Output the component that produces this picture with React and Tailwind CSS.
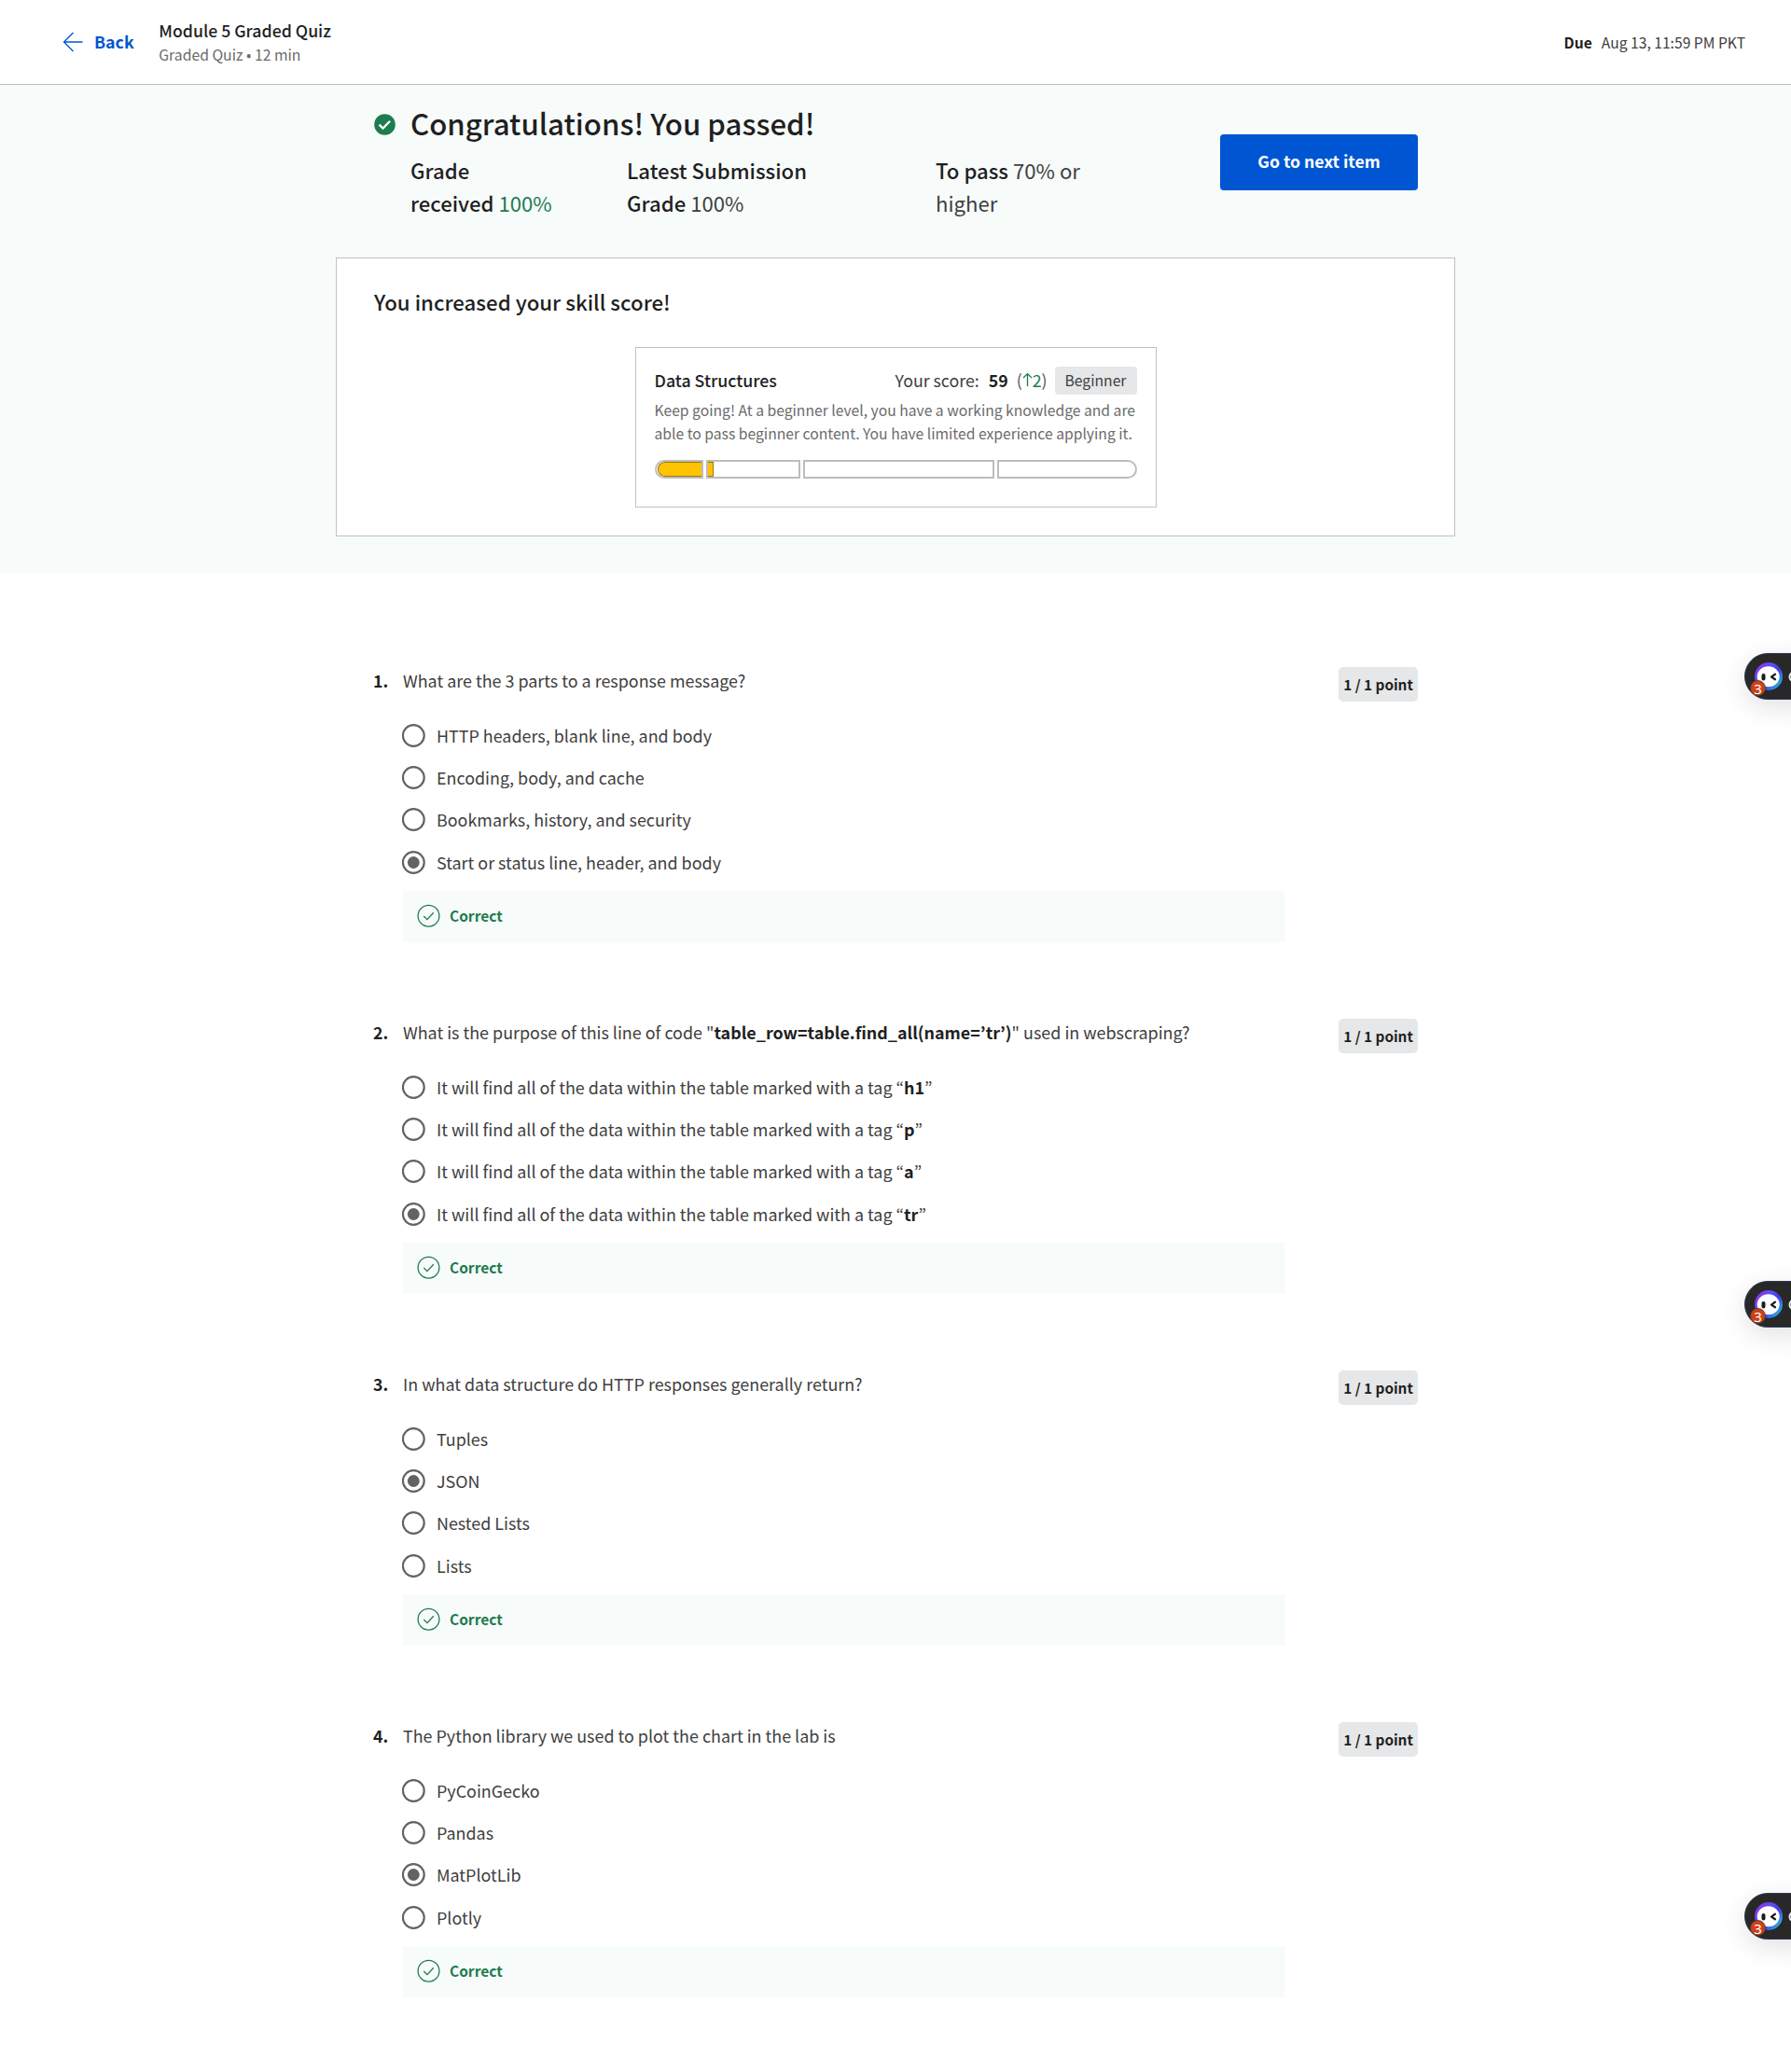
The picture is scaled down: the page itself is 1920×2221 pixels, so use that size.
import React from "react";

const tag = (name) => (
  <>
    It will find all of the data within the table marked with a tag “<b className="font-bold text-[#1f1f1f]">{name}</b>”
  </>
);

const QUESTIONS = [
  {
    text: "What are the 3 parts to a response message?",
    options: ["HTTP headers, blank line, and body", "Encoding, body, and cache", "Bookmarks, history, and security", "Start or status line, header, and body"],
    selected: 3,
  },
  {
    text: (
      <>
        What is the purpose of this line of code "
        <b className="font-bold text-[#1f1f1f]">table_row=table.find_all(name=’tr’)</b>" used in webscraping?
      </>
    ),
    options: [tag("h1"), tag("p"), tag("a"), tag("tr")],
    selected: 3,
  },
  {
    text: "In what data structure do HTTP responses generally return?",
    options: ["Tuples", "JSON", "Nested Lists", "Lists"],
    selected: 1,
  },
  {
    text: "The Python library we used to plot the chart in the lab is",
    options: ["PyCoinGecko", "Pandas", "MatPlotLib", "Plotly"],
    selected: 2,
  },
];

function Radio({ checked }) {
  return (
    <svg className="-ml-[1.2px] shrink-0" width="25" height="26" viewBox="0 0 25 26">
      <circle cx="12.3" cy="13.5" r="11.4" fill="#fff" stroke="#636363" strokeWidth="2.2" />
      {checked && <circle cx="12.3" cy="13.5" r="6.4" fill="#636363" />}
    </svg>
  );
}

function Question({ number, text, options, selected }) {
  return (
    <section className="flex h-[377px] items-start">
      <div className="w-8 shrink-0 text-[17.8px] leading-[30px] font-bold">{number}.</div>
      <div className="w-[945px]">
        <p className="h-[30px] text-[17.92px] leading-[30px] whitespace-nowrap text-[#404040]">{text}</p>
        <div className="mt-[29px] flex flex-col gap-[15px]">
          {options.map((o, i) => (
            <label key={i} className="flex h-[30px] items-center gap-[12.2px] last:mt-px">
              <Radio checked={i === selected} />
              <span className="text-[17.92px] leading-[30px] whitespace-nowrap text-[#404040]">{o}</span>
            </label>
          ))}
        </div>
        <div className="mt-4 flex h-[55px] items-center gap-[10px] bg-[#f7fbfa] pb-[2px] pl-[15px] text-[#1d7c50]">
          <svg width="25" height="25" viewBox="0 0 25 25" fill="none" stroke="currentColor" strokeWidth="1.3">
            <circle cx="12.5" cy="12.7" r="11.4" />
            <path d="M7.3 13l3.6 3.6 6.9-7.4" />
          </svg>
          <span className="mb-[2px] text-[15.5px] leading-6 font-bold">Correct</span>
        </div>
      </div>
      <div className="mt-px ml-[58px] flex h-[37px] w-[85px] items-center justify-center rounded-[5px] bg-[#e5e7e8] text-[15.3px] font-bold whitespace-nowrap">
        1 / 1 point
      </div>
    </section>
  );
}

function AssistantPill({ className }) {
  return (
    <div className={"absolute left-[1870px] h-[50px] w-[90px] rounded-[25px] border border-[#2c3a55] bg-[#272827] shadow-[0_8px_28px_rgba(0,0,0,0.12)] " + className}>
      <svg className="absolute -top-px -left-px" width="50" height="50" viewBox="0 0 50 50">
        <defs>
          <linearGradient id="ring" x1="0.1" y1="0.2" x2="0.9" y2="0.85">
            <stop offset="0" stopColor="#8a35e8" />
            <stop offset="0.3" stopColor="#5a50f0" />
            <stop offset="0.6" stopColor="#4a35f0" />
            <stop offset="1" stopColor="#22b5dc" />
          </linearGradient>
        </defs>
        <circle cx="26" cy="25" r="15" fill="url(#ring)" />
        <ellipse cx="25.7" cy="25.3" rx="12" ry="11" fill="#fff" />
        <rect x="18.5" y="22" width="4" height="7.4" rx="2" fill="#1b1b1b" />
        <path d="M33 22.6l-4 3 4 2.6" fill="none" stroke="#1b1b1b" strokeWidth="2.3" strokeLinecap="round" strokeLinejoin="round" />
        <circle cx="14.5" cy="37.5" r="8" fill="#cf4016" stroke="#3c3c3c" strokeWidth="0.8" />
        <circle cx="53.5" cy="25.5" r="5" fill="none" stroke="#eee" strokeWidth="2" />
      </svg>
      <span className="absolute top-[29px] left-[5.5px] w-4 text-center font-['Noto_Sans'] text-[15px] leading-4 text-white">3</span>
    </div>
  );
}

export default function App() {
  return (
    <div className="relative h-[2221px] w-[1920px] overflow-hidden bg-white font-['Noto_Sans_CJK_KR',sans-serif] text-[#1f1f1f]">
      <header className="flex h-[91px] items-center border-b border-[#bdbdbd] pr-[49px] pl-[67px]">
        <svg width="23" height="22" viewBox="0 0 23 22" fill="none" stroke="#0056d2" strokeWidth="1.3">
          <path d="M11.5 1L1.5 11l10 10M1.5 11H21.5" />
        </svg>
        <span className="mb-[2px] ml-[11px] text-[17.8px] leading-[30px] font-bold text-[#0056d2]">Back</span>
        <div className="mt-px ml-[26.5px]">
          <div className="text-[17.7px] leading-[26px] font-medium">Module 5 Graded Quiz</div>
          <div className="text-[15.75px] leading-[28px] text-[#6b6b6b]">Graded Quiz • 12 min</div>
        </div>
        <div className="mt-px ml-auto flex gap-[10px] text-[15.65px] leading-6">
          <span className="font-bold">Due</span>
          <span className="text-[#404040]">Aug 13, 11:59 PM PKT</span>
        </div>
      </header>

      <div className="h-[524px] bg-[#f7fbfa] px-[360px] pt-5">
        <div className="flex h-[165px] pl-[41px]">
          <svg className="mt-[11px] shrink-0" width="23" height="23" viewBox="0 0 23 23">
            <circle cx="11.5" cy="11.5" r="11.3" fill="#1d7c50" />
            <path d="M5.6 11.6l3.9 4 7.6-7.8" fill="none" stroke="#fff" strokeWidth="2.3" />
          </svg>
          <div className="mt-px ml-4">
            <h1 className="text-[31.2px] leading-[40px] font-medium">Congratulations! You passed!</h1>
            <div className="mt-[13px] flex text-[22.15px] leading-[35px] whitespace-nowrap">
              <div className="w-[232px]">
                <div className="font-medium">Grade</div>
                <div className="text-[#1d7c50]"><span className="font-medium text-[#1f1f1f]">received</span> 100%</div>
              </div>
              <div className="w-[331px]">
                <div className="font-medium">Latest Submission</div>
                <div className="text-[#404040]"><span className="font-medium text-[#1f1f1f]">Grade</span> 100%</div>
              </div>
              <div className="text-[#404040]">
                <div><span className="font-medium text-[#1f1f1f]">To pass</span> 70% or</div>
                <div>higher</div>
              </div>
            </div>
          </div>
          <button className="mt-[33px] mr-10 ml-auto h-[60px] w-[212px] rounded-[4px] bg-[#0056d2] pb-px text-[17.6px] font-bold text-white">Go to next item</button>
        </div>

        <div className="h-[299px] border border-[#c1c1c1] bg-white pt-[31px]">
          <h2 className="ml-10 text-[22.25px] leading-[30px] font-medium">You increased your skill score!</h2>
          <div className="mx-auto mt-[34px] h-[172px] w-[559px] border border-[#c1c1c1] px-5 pt-5">
            <div className="flex h-[30px] items-center text-[17.75px] leading-[28px] whitespace-nowrap">
              <span className="mb-[2px] font-medium">Data Structures</span>
              <span className="mb-[2px] ml-auto text-[#404040]">Your score:</span>
              <span className="mb-[2px] ml-[10px] font-bold">59</span>
              <span className="mb-[2px] ml-[9px] flex items-center text-[#555]">
                (
                <svg width="11" height="16" viewBox="0 0 11 16" fill="none" stroke="#1d7c50" strokeWidth="1.3">
                  <path d="M5.5 15V1.8M1 6l4.5-4.4L10 6" />
                </svg>
                <span className="text-[#1d7c50]">2</span>)
              </span>
              <span className="ml-2 flex h-[30px] w-[88px] items-center justify-center rounded-[4px] bg-[#e5e7e8] pb-px text-[15.7px] text-[#404040]">Beginner</span>
            </div>
            <p className="mt-1 text-[15.68px] leading-[25px] whitespace-nowrap text-[#6b6b6b]">
              Keep going! At a beginner level, you have a working knowledge and are<br />
              able to pass beginner content. You have limited experience applying it.
            </p>
            <div className="mt-4 flex h-5 gap-[2.5px]">
              <div className="w-[52.5px] overflow-hidden rounded-l-full border-2 border-[#bdbdbd]">
                <div className="ml-px h-4 rounded-l-full border-y-[1.5px] border-l-[1.5px] border-[#997a12] bg-[#ffc300]" />
              </div>
              <div className="w-[101.5px] border-2 border-[#bdbdbd]">
                <div className="h-4 w-[6px] border-y-[1.5px] border-r-[1.5px] border-[#997a12] bg-[#ffc300]" />
              </div>
              <div className="w-[205.5px] border-2 border-[#bdbdbd]" />
              <div className="flex-1 rounded-r-full border-2 border-[#bdbdbd]" />
            </div>
          </div>
        </div>
      </div>

      <main className="px-[400px] pt-[99px]">
        {QUESTIONS.map((q, i) => (
          <Question key={i} number={i + 1} {...q} />
        ))}
      </main>

      <AssistantPill className="top-[700px]" />
      <AssistantPill className="top-[1373px]" />
      <AssistantPill className="top-[2029px]" />
    </div>
  );
}
